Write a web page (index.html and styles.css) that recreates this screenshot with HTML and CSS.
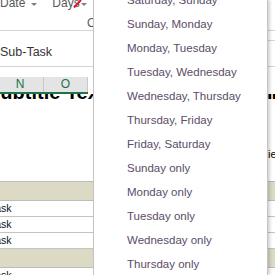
FILE: index.html
```html
<!DOCTYPE html>
<html lang="en">
<head>
  <meta charset="UTF-8">
  <title>Days filter</title>
  <link rel="stylesheet" href="styles.css">
</head>
<body>
  <div class="sheet">
    <div class="filter">
      <div class="heads">Date<span class="arrow"></span><span class="days">Days</span><span class="arrow days-arrow"></span></div>
      <div class="col">O</div>
      <svg class="pen" width="10" height="9" viewBox="0 0 10 9"><line x1="1" y1="7.5" x2="8" y2="0" stroke="#e3161d" stroke-width="2"/></svg>
    </div>

    <div class="task-row">
      <div class="label">Sub-Task</div>
      <div class="cell"></div>
    </div>

    <div class="gap"></div>

    <div class="colhead">
      <span class="n">N</span>
      <span class="o">O</span>
    </div>

    <div class="title">
      <div class="big">Subtitle Text</div>
      <div class="big small">ll</div>
    </div>

    <div class="note">
      <div></div>
      <div class="ie">ie</div>
    </div>

    <div class="band"></div>
    <div class="trow"><span>Task</span></div>
    <div class="trow"><span>Task</span></div>
    <div class="trow"><span>Task</span></div>
    <div class="band band2"></div>
    <div class="trow"><span>Task</span></div>
  </div>

  <div class="dropdown">
    <ul>
      <li>Saturday, Sunday</li>
      <li>Sunday, Monday</li>
      <li>Monday, Tuesday</li>
      <li>Tuesday, Wednesday</li>
      <li>Wednesday, Thursday</li>
      <li>Thursday, Friday</li>
      <li>Friday, Saturday</li>
      <li>Sunday only</li>
      <li>Monday only</li>
      <li>Tuesday only</li>
      <li>Wednesday only</li>
      <li>Thursday only</li>
    </ul>
  </div>
</body>
</html>
```

FILE: styles.css
```css
* {
  box-sizing: border-box;
}
html, body {
  margin: 0;
}
body {
  width: 275px;
  height: 275px;
  overflow: hidden;
  position: relative;
  background: #fff;
  font-family: "Liberation Sans", Arial, sans-serif;
}

/* filter header row */
.filter {
  display: flow-root;
  position: relative;
  height: 31px;
  border-bottom: 1px solid #d4d4d4;
  color: #595959;
  font-size: 12px;
  line-height: 14px;
  white-space: nowrap;
}
.heads {
  margin-top: -4px;
}
.arrow {
  display: inline-block;
  vertical-align: top;
  width: 0;
  height: 0;
  margin: 7px 0 0 6px;
  border-left: 3px solid transparent;
  border-right: 3px solid transparent;
  border-top: 3px solid #7f7f7f;
}
.days {
  margin-left: 15px;
}
.days-arrow {
  margin-left: 1px;
}
.col {
  margin-top: 6px;
  padding-left: 87px;
}
.pen {
  position: absolute;
  left: 73px;
  top: 0;
}

/* sub-task row */
.task-row {
  display: grid;
  grid-template-columns: 268px 1fr;
  height: 36px;
  border-bottom: 1px solid #d4d4d4;
}
.task-row .label {
  padding-top: 14px;
  font-size: 12.5px;
  line-height: 15px;
  color: #353535;
}
.task-row .cell {
  grid-column: 2;
  height: 10px;
  border-bottom: 1px solid #d4d4d4;
}

.gap {
  height: 10px;
}

/* frozen column header */
.colhead {
  display: flex;
  width: 88px;
  height: 17px;
  background: #e4e4e4;
  border-bottom: 2px solid #217346;
  color: #217346;
  font-size: 12px;
  line-height: 15px;
}
.colhead span {
  width: 44px;
  text-align: center;
  border-right: 1px solid #c8c8c8;
}
.colhead .n {
  padding-right: 3px;
}

/* big title, mostly under the header */
.title {
  display: grid;
  grid-template-columns: 267px 1fr;
  height: 20px;
  overflow: hidden;
  font-weight: bold;
  font-size: 20px;
  line-height: 20px;
  color: #000;
}
.title .big {
  margin-top: -12px;
  margin-left: -13px;
  white-space: nowrap;
}
.title .small {
  margin-left: 0;
  letter-spacing: -1px;
}

.note {
  display: grid;
  grid-template-columns: 268px 1fr;
  height: 67px;
  font-size: 11px;
  line-height: 13px;
  color: #000;
}
.note .ie {
  padding-top: 34px;
}

/* table bands */
.band {
  height: 20px;
  background: #dcd9c5;
  border-top: 1px solid #bcbcbc;
  border-bottom: 1px solid #bcbcbc;
}
.band2 {
  height: 19px;
  border-top: 0;
}
.trow {
  height: 16px;
  border-bottom: 1px solid #c4c4c4;
  font-size: 10.5px;
  line-height: 15px;
  color: #111;
  white-space: nowrap;
}
.trow span {
  margin-left: -10px;
}

/* dropdown list */
.dropdown {
  position: absolute;
  left: 93px;
  top: 0;
  width: 175px;
  height: 275px;
  overflow: hidden;
  background: #fff;
  border-left: 1px solid #c4c4c4;
  border-right: 1px solid #c4c4c4;
  box-shadow: 2px 0 3px rgba(0, 0, 0, 0.18);
}
.dropdown ul {
  list-style: none;
  margin: -12px 0 0;
  padding: 0 0 0 33px;
  font-size: 11.5px;
  line-height: 24px;
  color: #5a4d66;
  white-space: nowrap;
}
```
